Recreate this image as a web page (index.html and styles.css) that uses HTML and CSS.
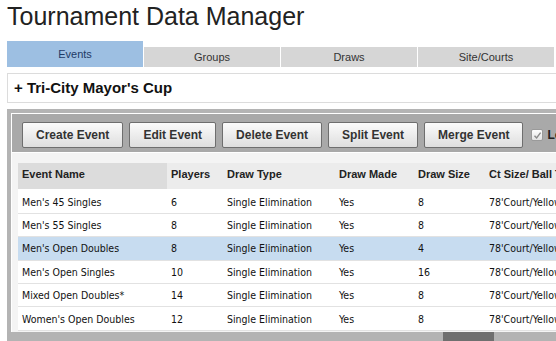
FILE: index.html
```html
<!DOCTYPE html>
<html lang="en">
<head>
    <meta charset="UTF-8">
    <meta name="viewport" content="width=device-width, initial-scale=1.0">
    <title>Tournament Data Manager</title>
    <link rel="stylesheet" href="styles.css">
</head>
<body>
<div class="page">
    <h1 class="title">Tournament Data Manager</h1>

    <!-- Section tabs -->
    <nav class="tabs">
        <button class="tab active">Events</button>
        <button class="tab">Groups</button>
        <button class="tab">Draws</button>
        <button class="tab">Site/Courts</button>
    </nav>

    <div class="tourney">+ Tri-City Mayor's Cup</div>

    <!-- Events panel -->
    <section class="panel">
        <div class="panel-inner">
            <div class="toolbar">
                <button class="tool-button">Create Event</button>
                <button class="tool-button">Edit Event</button>
                <button class="tool-button">Delete Event</button>
                <button class="tool-button">Split Event</button>
                <button class="tool-button">Merge Event</button>
                <label class="lock">
                    <span class="check">
                        <svg width="9" height="9" viewBox="0 0 9 9"><path d="M1.5 4.8 L3.6 7 L7.6 1.6" fill="none" stroke="#8a8a8a" stroke-width="1.4"/></svg>
                    </span>
                    Lock Events
                </label>
            </div>

            <div class="grid-wrap">
                <table class="grid">
                    <thead>
                        <tr>
                            <th class="col-name sorted">Event Name</th>
                            <th class="col-players">Players</th>
                            <th class="col-type">Draw Type</th>
                            <th class="col-made">Draw Made</th>
                            <th class="col-size">Draw Size</th>
                            <th class="col-court">Ct Size/ Ball Type</th>
                        </tr>
                    </thead>
                    <tbody>
                        <tr><td>Men's 45 Singles</td><td>6</td><td>Single Elimination</td><td>Yes</td><td>8</td><td>78'Court/Yellow</td></tr>
                        <tr><td>Men's 55 Singles</td><td>8</td><td>Single Elimination</td><td>Yes</td><td>8</td><td>78'Court/Yellow</td></tr>
                        <tr class="selected"><td>Men's Open Doubles</td><td>8</td><td>Single Elimination</td><td>Yes</td><td>4</td><td>78'Court/Yellow</td></tr>
                        <tr><td>Men's Open Singles</td><td>10</td><td>Single Elimination</td><td>Yes</td><td>16</td><td>78'Court/Yellow</td></tr>
                        <tr><td>Mixed Open Doubles*</td><td>14</td><td>Single Elimination</td><td>Yes</td><td>8</td><td>78'Court/Yellow</td></tr>
                        <tr><td>Women's Open Doubles</td><td>12</td><td>Single Elimination</td><td>Yes</td><td>8</td><td>78'Court/Yellow</td></tr>
                    </tbody>
                </table>
            </div>

            <!-- Horizontal scroll bar of the grid -->
            <div class="hscroll"><div class="thumb"></div></div>
        </div>
    </section>
</div>
</body>
</html>
```

FILE: styles.css
```css
/* Basic page styling */
body {
    font-family: "Liberation Sans", Arial, sans-serif;
    background-color: #ffffff;
    color: #222;
    margin: 0;
    padding: 0;
    overflow: hidden;
}

.page {
    width: 660px;
    padding-left: 7px;
}

/* Page title */
.title {
    font-size: 25px;
    font-weight: normal;
    line-height: 30px;
    margin: 1px 0 10px 0;
    color: #222;
}

/* Tabs row */
.tabs {
    display: flex;
    align-items: flex-end;
    gap: 1px;
}

.tab {
    width: 136px;
    height: 20px;
    border: none;
    padding: 0;
    background-color: #d6d6d6;
    color: #333;
    font-family: "Liberation Sans", Arial, sans-serif;
    font-size: 11px;
}

.tab.active {
    height: 26px;
    background-color: #9dbfe2;
    color: #1d3a66;
}

/* Tournament name bar */
.tourney {
    box-sizing: border-box;
    height: 30px;
    margin-top: 6px;
    padding-left: 6px;
    border: 1px solid #dcdcdc;
    border-right: none;
    font-size: 15px;
    font-weight: bold;
    line-height: 28px;
    color: #111;
}

/* Events panel */
.panel {
    margin-top: 6px;
    border: 4px solid #b4b4b4;
    border-right: none;
    border-bottom: none;
}

.panel-inner {
    border-top: 1px solid #fff;
    border-left: 1px solid #fff;
    background-color: #f4f4f4;
}

.toolbar {
    display: flex;
    align-items: center;
    gap: 6px;
    padding: 8px 0 4px 10px;
    background-color: #a9a9a9;
}

.tool-button {
    height: 26px;
    padding: 0 13px;
    border: 1px solid #6e6e6e;
    border-radius: 2px;
    background: linear-gradient(#fbfbfb, #dedede);
    color: #333;
    font-family: "Liberation Sans", Arial, sans-serif;
    font-size: 12px;
    font-weight: bold;
}

.lock {
    display: flex;
    align-items: center;
    gap: 4px;
    margin-left: 2px;
    font-size: 12px;
    font-weight: bold;
    color: #222;
    white-space: nowrap;
}

.check {
    display: flex;
    align-items: center;
    justify-content: center;
    width: 10px;
    height: 10px;
    border: 1px solid #9a9a9a;
    border-radius: 2px;
    background: linear-gradient(#fdfdfd, #e2e2e2);
}

/* Grid */
.grid-wrap {
    padding: 10px 0 1px 6px;
    border-top: 1px solid #fff;
}

.grid {
    border-collapse: collapse;
    background-color: #fff;
    table-layout: fixed;
}

.grid th {
    box-sizing: border-box;
    height: 27px;
    padding: 0 0 3px 4px;
    border-bottom: 3px solid #fff;
    background-color: #ececec;
    font-size: 11px;
    font-weight: bold;
    text-align: left;
    color: #222;
    white-space: nowrap;
}

.grid th.sorted {
    background-color: #dcdcdc;
}

.col-name { width: 149px; }
.col-players { width: 56px; }
.col-type { width: 112px; }
.col-made { width: 79px; }
.col-size { width: 71px; }
.col-court { width: 130px; }

.grid td {
    box-sizing: border-box;
    height: 23.4px;
    padding: 0 0 0 4px;
    border-bottom: 1px solid #e2e2e2;
    font-family: "DejaVu Sans Condensed", "DejaVu Sans", sans-serif;
    font-size: 10.5px;
    color: #111;
    white-space: nowrap;
    overflow: hidden;
}

.grid tr.selected td {
    background-color: #c7dcf0;
}

/* Scroll bar under the grid */
.hscroll {
    height: 12px;
    background-color: #b3b3b3;
    margin-left: -5px;
}

.thumb {
    width: 51px;
    height: 12px;
    margin-left: 436px;
    background-color: #6f6f6f;
}
```
